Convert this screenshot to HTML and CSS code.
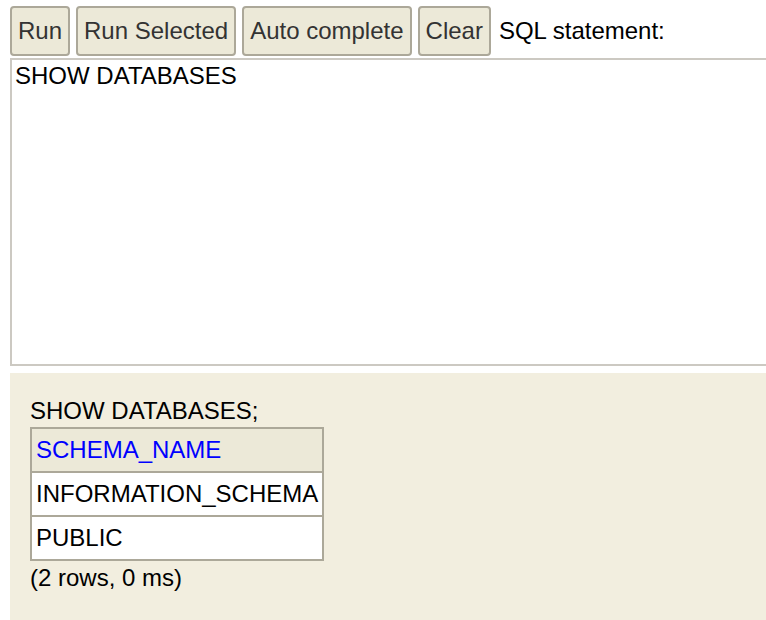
FILE: index.html
```html
<!DOCTYPE html>
<html>
<head>
<meta charset="utf-8">
<link rel="stylesheet" href="styles.css">
</head>
<body>
<div class="toolbar">
  <button class="btn">Run</button>
  <button class="btn">Run Selected</button>
  <button class="btn">Auto complete</button>
  <button class="btn">Clear</button>
  <span class="label">SQL statement:</span>
</div>
<div class="editor">SHOW DATABASES</div>
<div class="result">
  <div class="stmt">SHOW DATABASES;</div>
  <table class="rs">
    <tr><th>SCHEMA_NAME</th></tr>
    <tr><td>INFORMATION_SCHEMA</td></tr>
    <tr><td>PUBLIC</td></tr>
  </table>
  <div class="count">(2 rows, 0 ms)</div>
</div>
</body>
</html>
```
FILE: styles.css
```css
html, body {
  margin: 0;
  padding: 0;
  overflow: hidden;
  background: #fff;
  height: 620px;
}
body {
  font-family: "Liberation Sans", Arial, sans-serif;
  font-size: 24px;
  color: #000;
  padding: 6px 0 0 10px;
  box-sizing: border-box;
}
.toolbar {
  display: flex;
  align-items: center;
  gap: 6px;
  height: 50px;
}
.btn {
  font-family: "Liberation Sans", Arial, sans-serif;
  font-size: 24px;
  color: #333;
  background: #ece9d8;
  border: 2px solid #aca899;
  border-radius: 4px;
  height: 50px;
  padding: 0 6px;
  margin: 0;
}
.label {
  margin-left: 2px;
  color: #000;
}
.editor {
  margin-top: 2px;
  margin-right: -4px;
  border: 2px solid #ccc9c2;
  padding: 2px 3px;
  box-sizing: border-box;
  height: 308px;
  line-height: 28px;
}
.result {
  margin-top: 7px;
  margin-right: -4px;
  background: #f2eedf;
  padding: 24px 20px 0;
  height: 223px;
}
.stmt {
  line-height: 28px;
}
.rs {
  border-collapse: collapse;
  margin-top: 2px;
}
.rs th, .rs td {
  border: 2px solid #aca899;
  text-align: left;
  font-weight: normal;
  height: 44px;
  padding: 0 4px;
  box-sizing: border-box;
}
.rs th {
  background: #ece9d8;
  color: #0000ff;
}
.rs td {
  background: #fff;
}
.count {
  margin-top: 3px;
  line-height: 28px;
}
```
